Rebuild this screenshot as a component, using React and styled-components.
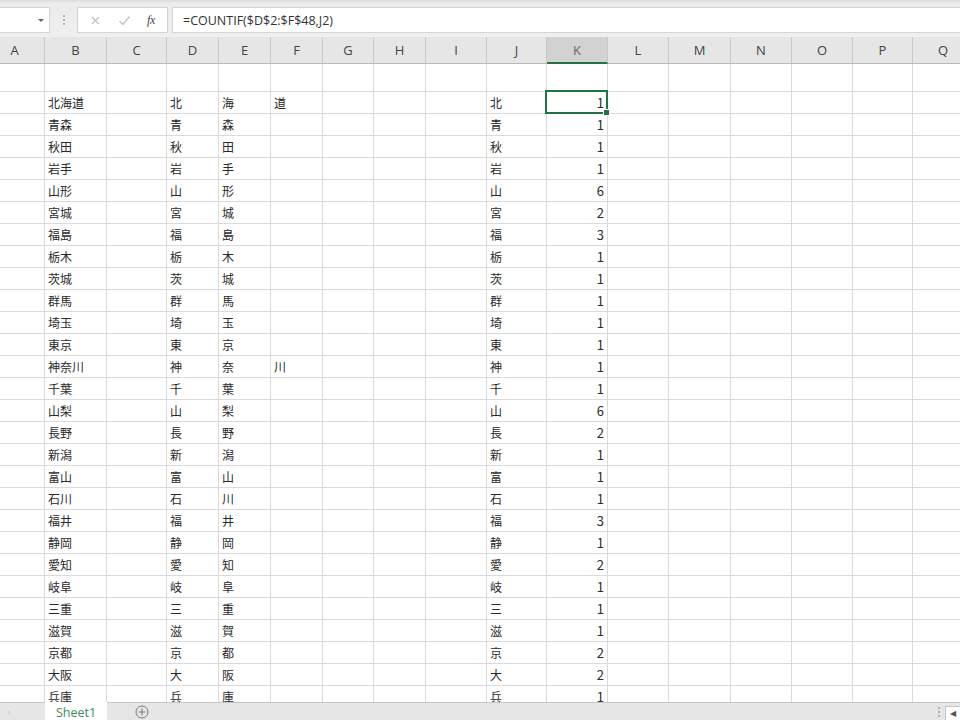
import React from "react";
import styled, { createGlobalStyle } from "styled-components";

const GlobalStyle = createGlobalStyle`
  html, body {
    margin: 0;
    padding: 0;
    background: #ffffff;
    overflow: hidden;
  }
`;

const COLUMNS = [
  ["A", 60], ["B", 62], ["C", 60], ["D", 52], ["E", 52], ["F", 52], ["G", 51],
  ["H", 52], ["I", 61], ["J", 60], ["K", 61], ["L", 61], ["M", 62], ["N", 61],
  ["O", 61], ["P", 60], ["Q", 61],
];

const PREFS = [
  ["北海道", 1], ["青森", 1], ["秋田", 1], ["岩手", 1], ["山形", 6], ["宮城", 2],
  ["福島", 3], ["栃木", 1], ["茨城", 1], ["群馬", 1], ["埼玉", 1], ["東京", 1],
  ["神奈川", 1], ["千葉", 1], ["山梨", 6], ["長野", 2], ["新潟", 1], ["富山", 1],
  ["石川", 1], ["福井", 3], ["静岡", 1], ["愛知", 2], ["岐阜", 1], ["三重", 1],
  ["滋賀", 1], ["京都", 2], ["大阪", 2], ["兵庫", 1],
];

const Sheet = styled.div`
  width: 960px;
  height: 720px;
  display: flex;
  flex-direction: column;
  overflow: hidden;
  background: #fff;
`;

const FormulaBar = styled.div`
  height: 37px;
  flex: none;
  display: flex;
  align-items: center;
  background: linear-gradient(#dcdcdc 0, #ececec 3px, #efefef 100%);
  box-sizing: border-box;
  padding-top: 3px;
`;

const NameBox = styled.div`
  width: 50px;
  height: 26px;
  background: #fff;
  border: 1px solid #d4d4d4;
  border-left: none;
  box-sizing: border-box;
  display: flex;
  align-items: center;
  justify-content: flex-end;
  padding-right: 5px;
`;

const Caret = styled.span`
  width: 0;
  height: 0;
  border-left: 3px solid transparent;
  border-right: 3px solid transparent;
  border-top: 3px solid #666;
`;

const Grip = styled.div`
  width: 27px;
  display: flex;
  flex-direction: column;
  align-items: center;
  gap: 2px;
  span {
    width: 2px;
    height: 2px;
    background: #b4b4b4;
  }
`;

const ButtonGroup = styled.div`
  width: 91px;
  height: 26px;
  background: #fff;
  border: 1px solid #d4d4d4;
  box-sizing: border-box;
  display: flex;
  align-items: center;
  justify-content: space-around;
  padding: 0 4px;
`;

const FxText = styled.span`
  font-family: "Liberation Serif", serif;
  font-style: italic;
  font-size: 12px;
  color: #444;
  letter-spacing: -0.5px;
`;

const FormulaInput = styled.div`
  flex: 1;
  height: 26px;
  margin-left: 4px;
  background: #fff;
  border: 1px solid #d4d4d4;
  border-right: none;
  box-sizing: border-box;
  display: flex;
  align-items: center;
  padding-left: 10px;
  font-family: "Open Sans", "Noto Sans CJK JP", sans-serif;
  font-size: 12.5px;
  color: #333;
`;

const GridViewport = styled.div`
  flex: 1;
  overflow: hidden;
`;

const Grid = styled.div`
  margin-left: -15px;
  display: grid;
  grid-template-columns: ${COLUMNS.map(([, w]) => `${w}px`).join(" ")};
  grid-template-rows: 27px 28px;
  grid-auto-rows: 22px;
  background: #fff;
`;

const HeaderCell = styled.div`
  box-sizing: border-box;
  background: ${(p) => (p.$active ? "#d2d2d2" : "#e6e6e6")};
  border-right: 1px solid #c9c9c9;
  border-bottom: ${(p) => (p.$active ? "2px solid #217346" : "1px solid #b8b8b8")};
  display: flex;
  align-items: center;
  justify-content: center;
  font-family: "Open Sans", "Liberation Sans", sans-serif;
  font-size: 13px;
  color: ${(p) => (p.$active ? "#6a6a6a" : "#444")};
  padding-bottom: ${(p) => (p.$active ? "0" : "1px")};
`;

const Cell = styled.div`
  position: relative;
  box-sizing: border-box;
  border-right: 1px solid #dadada;
  border-bottom: 1px solid #dadada;
  display: flex;
  align-items: center;
  justify-content: ${(p) => (p.$num ? "flex-end" : "flex-start")};
  padding: 0 ${(p) => (p.$num ? "3px" : "0")} 0 3px;
  font-family: "Noto Sans CJK JP", "Noto Sans", sans-serif;
  font-size: ${(p) => (p.$num ? "13px" : "12px")};
  color: #2a2a2a;
  white-space: nowrap;

  ${(p) =>
    p.$selected &&
    `
    &::after {
      content: "";
      position: absolute;
      left: -2px;
      top: -2px;
      right: -1px;
      bottom: -1px;
      border: 2px solid #217346;
      pointer-events: none;
    }
    &::before {
      content: "";
      position: absolute;
      right: -3px;
      bottom: -3px;
      width: 5px;
      height: 5px;
      background: #217346;
      border: 1px solid #fff;
      z-index: 2;
    }
  `}
`;

const TabBar = styled.div`
  height: 18px;
  flex: none;
  display: flex;
  align-items: stretch;
  background: #e6e6e6;
  border-top: 1px solid #c6c6c6;
  box-sizing: border-box;
`;

const NavArea = styled.div`
  width: 45px;
  display: flex;
  align-items: center;
  padding-left: 7px;
  box-sizing: border-box;
  color: #c4c4c4;
  font-size: 9px;
  font-family: "DejaVu Sans", sans-serif;
`;

const SheetTab = styled.div`
  width: 62px;
  margin-top: -1px;
  background: #fff;
  display: flex;
  align-items: center;
  justify-content: center;
  font-family: "Open Sans", "Liberation Sans", sans-serif;
  font-size: 12.5px;
  color: #3d8a5c;
  padding-top: 2px;
  box-sizing: border-box;
`;

const AddSheet = styled.div`
  width: 70px;
  display: flex;
  align-items: center;
  justify-content: center;
`;

const Spacer = styled.div`
  flex: 1;
`;

const ScrollGrip = styled.div`
  width: 12px;
  display: flex;
  flex-direction: column;
  align-items: center;
  justify-content: center;
  gap: 2px;
  span {
    width: 2px;
    height: 2px;
    background: #b0b0b0;
  }
`;

const ScrollButton = styled.div`
  width: 14px;
  margin-top: 3px;
  background: #fff;
  border: 1px solid #c6c6c6;
  border-right: none;
  border-bottom: none;
  display: flex;
  align-items: center;
  justify-content: center;
  font-size: 8px;
  color: #555;
`;

function rowCells(values, rowKey, selectedCol) {
  return COLUMNS.map(([col]) => {
    const v = values[col];
    return (
      <Cell
        key={`${rowKey}-${col}`}
        $num={typeof v === "number"}
        $selected={selectedCol === col}
      >
        {v}
      </Cell>
    );
  });
}

export default function App() {
  const chars = (name) => Array.from(name);

  return (
    <Sheet>
      <GlobalStyle />
      <FormulaBar>
        <NameBox>
          <Caret />
        </NameBox>
        <Grip>
          <span />
          <span />
          <span />
        </Grip>
        <ButtonGroup>
          <svg width="11" height="11" viewBox="0 0 11 11">
            <path d="M2 2 L9 9 M9 2 L2 9" stroke="#c2c2c2" strokeWidth="1.2" />
          </svg>
          <svg width="13" height="11" viewBox="0 0 13 11">
            <path d="M1.5 6 L5 9.5 L11.5 1.5" stroke="#c2c2c2" strokeWidth="1.3" fill="none" />
          </svg>
          <FxText>fx</FxText>
        </ButtonGroup>
        <FormulaInput>=COUNTIF($D$2:$F$48,J2)</FormulaInput>
      </FormulaBar>

      <GridViewport>
        <Grid>
          {COLUMNS.map(([col]) => (
            <HeaderCell key={col} $active={col === "K"}>
              {col}
            </HeaderCell>
          ))}
          {rowCells({}, "r1")}
          {PREFS.map(([name, count], idx) => {
            const c = chars(name);
            return rowCells(
              { B: name, D: c[0], E: c[1], F: c[2], J: c[0], K: count },
              `r${idx + 2}`,
              idx === 0 ? "K" : null
            );
          })}
        </Grid>
      </GridViewport>

      <TabBar>
        <NavArea>›</NavArea>
        <SheetTab>Sheet1</SheetTab>
        <AddSheet>
          <svg width="14" height="14" viewBox="0 0 14 14">
            <circle cx="7" cy="7" r="6" fill="none" stroke="#777" strokeWidth="1" />
            <path d="M7 3.5 V10.5 M3.5 7 H10.5" stroke="#777" strokeWidth="1.1" />
          </svg>
        </AddSheet>
        <Spacer />
        <ScrollGrip>
          <span />
          <span />
          <span />
        </ScrollGrip>
        <ScrollButton>◀</ScrollButton>
      </TabBar>
    </Sheet>
  );
}
